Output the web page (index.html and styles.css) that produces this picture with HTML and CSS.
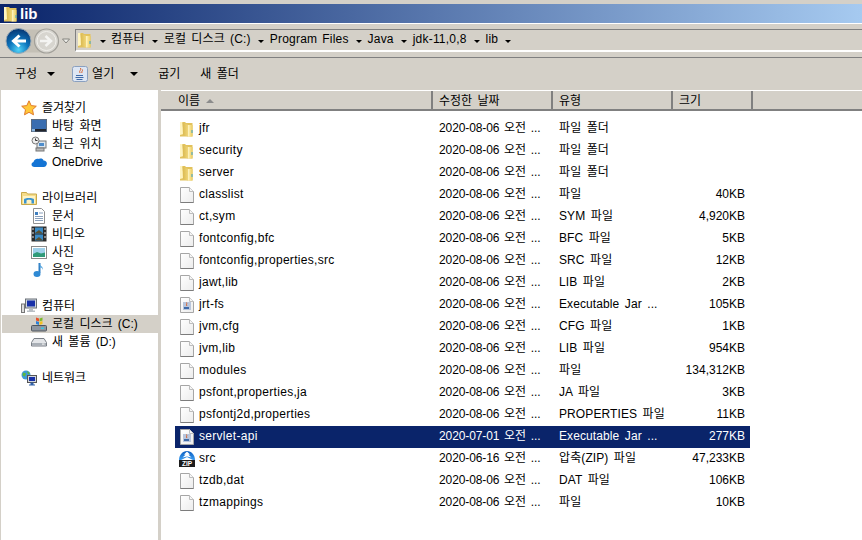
FILE: index.html
```html
<!DOCTYPE html>
<html lang="ko">
<head>
<meta charset="utf-8">
<title>lib</title>
<link rel="stylesheet" href="styles.css">
</head>
<body>
<svg class="defs" width="0" height="0" aria-hidden="true">
  <defs>
    <linearGradient id="gf" x1="0" y1="0" x2="1" y2="0"><stop offset="0" stop-color="#fff6c8"/><stop offset=".5" stop-color="#f6e08a"/><stop offset="1" stop-color="#e9c95e"/></linearGradient>
    <linearGradient id="gd" x1="0" y1="0" x2="1" y2="0"><stop offset="0" stop-color="#d9b84e"/><stop offset="1" stop-color="#f0d678"/></linearGradient>
    <linearGradient id="gp" x1="0" y1="0" x2="1" y2="1"><stop offset="0" stop-color="#ffffff"/><stop offset="1" stop-color="#ececec"/></linearGradient>
    <radialGradient id="gb" cx=".5" cy=".85" r=".8"><stop offset="0" stop-color="#52d4f8"/><stop offset=".5" stop-color="#0c74bc"/><stop offset="1" stop-color="#063a78"/></radialGradient>
    <linearGradient id="gz" x1="0" y1="0" x2="0" y2="1"><stop offset="0" stop-color="#0a5cc0"/><stop offset="1" stop-color="#3a9cf0"/></linearGradient>
    <symbol id="folder" viewBox="0 0 16 16">
      <path d="M1 1h5l1 1h6.500v13.500h-12.500z" fill="#e2c25c"/>
      <path d="M1 1h2.500l1 12-3.500 1z" fill="#fff4c0"/>
      <path d="M3.500 1.500l5.500 2.500v11.500l-5-1.500z" fill="url(#gd)"/>
      <path d="M9 4h4.500v11.500h-4.500z" fill="url(#gf)"/>
      <path d="M12.500 9h1v3h-1z" fill="#38a4cc"/>
    </symbol>
    <symbol id="doc" viewBox="0 0 16 16">
      <path d="M1.500 .5h9l4 4v11h-13z" fill="url(#gp)" stroke="#a6a6a6"/>
      <path d="M10.500 .5v4h4" fill="#f6f6f6" stroke="#bdbdbd"/>
      <path d="M1.500 15.500h13" stroke="#7c7c7c"/>
    </symbol>
    <symbol id="jar" viewBox="0 0 16 16">
      <path d="M1.500 .5h9l4 4v11h-13z" fill="url(#gp)" stroke="#a6a6a6"/>
      <path d="M10.500 .5v4h4" fill="#f6f6f6" stroke="#bdbdbd"/>
      <rect x="4" y="5" width="8" height="8" fill="#b9c6dc"/>
      <path d="M7.500 5.500c1 1.500-1 2 .5 3.500" stroke="#d9622a" fill="none"/>
      <path d="M5 10h5v2h-5z" fill="#3f6aa8"/>
    </symbol>
    <symbol id="zip" viewBox="0 0 16 16">
      <path d="M0 9c0-5 3.500-9 8-9s8 4 8 9z" fill="url(#gz)"/>
      <path d="M8 .5l3 3-1.500.3 3 2.700-4.500-1-4.500 1 3-2.700-1.500-.3zM2 9l6-3 6 3z" fill="#fff"/>
      <rect x="0" y="9" width="16" height="7" fill="#1c1c1c"/>
      <text x="8" y="15.200" text-anchor="middle" class="ziptxt">ZIP</text>
    </symbol>
    <symbol id="star" viewBox="0 0 16 16">
      <path d="M8 .8l2.200 4.800 5.100.6-3.800 3.500 1 5.100L8 12.300l-4.500 2.500 1-5.100L.7 6.200l5.100-.6z" fill="#ffc83a" stroke="#e07a2a"/>
    </symbol>
    <symbol id="libs" viewBox="0 0 16 16">
      <path d="M.5 2.500h5l1 1.500h9v10.500h-15z" fill="#f5dc8a" stroke="#c9a94a"/>
      <path d="M2 6h12v7.500h-12z" fill="#fff3c4"/>
      <path d="M3 13.500v-4c0-2 10-2 10 0v4h-2.500v-3c0-1-5-1-5 0v3z" fill="#3a94cf"/>
    </symbol>
    <symbol id="desk" viewBox="0 0 16 16">
      <rect x=".5" y="1.500" width="15" height="12" fill="#3a6db0" stroke="#5a6a80"/>
      <rect x="1" y="11" width="14" height="2.500" fill="#22252c"/>
      <rect x="1" y="11" width="3" height="2.500" fill="#8cb7e0"/>
    </symbol>
    <symbol id="recent" viewBox="0 0 16 16">
      <rect x="6" y="5" width="9" height="7" fill="#dce6ef" stroke="#777"/>
      <rect x="8" y="7" width="5" height="3" fill="#4d8ccb"/>
      <circle cx="4.500" cy="4.500" r="3.500" fill="#eee" stroke="#777"/>
      <path d="M4.500 2.500v2h2" stroke="#333" fill="none"/>
      <rect x="5" y="12" width="8" height="3" fill="#bbb" stroke="#777"/>
    </symbol>
    <symbol id="cloud" viewBox="0 0 16 16">
      <path d="M3.500 13c-3.500 0-4-4-1-5 .5-2.500 3-4 5.500-3 1.500-1 4-.5 4.500 1.500 3 0 4 2.500 3 4.500-.5 1.300-1.500 2-2.500 2z" fill="#1474d4"/>
    </symbol>
    <symbol id="docs" viewBox="0 0 16 16">
      <path d="M2.500 .5h8l3 3v12h-11z" fill="#fff" stroke="#909090"/>
      <rect x="4" y="4" width="3" height="3" fill="#3f7fbf"/>
      <path d="M8 5h4M4 8.500h8M4 10.500h8M4 12.500h8" stroke="#8aa0bc"/>
    </symbol>
    <symbol id="video" viewBox="0 0 16 16">
      <rect x=".5" y=".5" width="15" height="15" fill="#2c2c2c"/>
      <path d="M4 1.500h8v6h-8zM4 8.500h8v6h-8z" fill="#3a8ac4"/>
      <path d="M4 7l4-3 4 3.500zM4 14l4-3 4 3.500z" fill="#5a5030"/>
      <path d="M1.500 2h1v2h-1zM1.500 6h1v2h-1zM1.500 10h1v2h-1zM13.500 2h1v2h-1zM13.500 6h1v2h-1zM13.500 10h1v2h-1z" fill="#ddd"/>
    </symbol>
    <symbol id="photo" viewBox="0 0 16 16">
      <rect x=".5" y="2.500" width="15" height="12" fill="#fff" stroke="#8a8a8a"/>
      <rect x="2" y="4" width="12" height="9" fill="#9fd0ea"/>
      <path d="M2 10l4-2 4 1.500 4-1v4.500h-12z" fill="#2f9a78"/>
    </symbol>
    <symbol id="note" viewBox="0 0 16 16">
      <path d="M8.500 1v10" stroke="#2f7fc4" stroke-width="2" fill="none"/>
      <path d="M8.500 1c0 3 4 3 3.500 7-.5-2-2-2.500-3-2.500z" fill="#5aa8e0"/>
      <ellipse cx="6" cy="12" rx="3.500" ry="3" fill="#2f8ad4"/>
    </symbol>
    <symbol id="pc" viewBox="0 0 16 16">
      <rect x=".5" y="6" width="3" height="8.500" fill="#ddd" stroke="#777"/>
      <rect x="4.500" y="1" width="11" height="9" fill="#cfd6de" stroke="#6a7078"/>
      <rect x="6" y="2.500" width="8" height="6" fill="#1830a8"/>
      <path d="M8 10.500h4v2h2v1.500h-8v-1.500h2z" fill="#b8bec4"/>
    </symbol>
    <symbol id="cdrive" viewBox="0 0 16 16">
      <rect x=".5" y="9.500" width="15" height="5.500" rx="1" fill="#8e96a0" stroke="#50565e"/>
      <rect x="10" y="11.500" width="3" height="1.500" fill="#35c8e8"/>
      <path d="M5 1.500l3 1v3l-3-1z" fill="#e8502a"/>
      <path d="M8.500 2.500l3-1v3l-3 1z" fill="#7cb82a"/>
      <path d="M5 5l3 1v3l-3-1z" fill="#2a80d8"/>
      <path d="M8.500 6l3-1v3l-3 1z" fill="#f4c020"/>
    </symbol>
    <symbol id="drive" viewBox="0 0 16 16">
      <path d="M3 4.500h10l2.500 4v3.500h-15v-3.500z" fill="#e3e5e8" stroke="#7a7f86"/>
      <path d="M1 9h14v2.500h-14z" fill="#a9afb6"/>
      <rect x="11" y="9.500" width="2.500" height="1.200" fill="#eee"/>
    </symbol>
    <symbol id="net" viewBox="0 0 16 16">
      <circle cx="5" cy="5" r="4.500" fill="#3c9ad8"/>
      <path d="M2 2.500l3 1-1 3-2.500-1zM6 1l3 2-2 1.500z" fill="#5cb83c"/>
      <rect x="6.500" y="5.500" width="9" height="7" fill="#cfd6de" stroke="#555"/>
      <rect x="8" y="7" width="6" height="4" fill="#1830a8"/>
      <path d="M9.500 12.500h3v2h-3zM8 14.500h6v1h-6z" fill="#3060a8"/>
    </symbol>
    <symbol id="javaopen" viewBox="0 0 16 16">
      <rect x=".5" y=".5" width="15" height="15" rx="2" fill="#dde6f4" stroke="#8aa0c0"/>
      <path d="M8.500 2c1.500 2-2 2.500-.5 5M10.500 3.500c.5 1.500-1.500 2-.5 3.500" stroke="#d9622a" fill="none"/>
      <path d="M4 9h7v1h-7zM3.500 11h8v1h-8zM4.500 13h6v1h-6z" fill="#3f6aa8"/>
    </symbol>
  </defs>
</svg>

<div class="app">
  <header class="titlebar">
    <svg class="ico16"><use href="#folder"/></svg>
    <span class="title-text">lib</span>
  </header>

  <div class="navbar">
    <div class="navbtns">
      <svg class="navsvg" width="75" height="28" viewBox="0 0 75 28">
        <path d="M19 2.500h27v23h-27z" fill="#c4c0b6"/>
        <circle cx="46.500" cy="14" r="12" fill="#d7d5cf" stroke="#a2a09a" stroke-width="1.200"/>
        <circle cx="46.500" cy="14" r="9.500" fill="none" stroke="#f0efeb"/>
        <path d="M40 14h10M45.500 9l5.500 5-5.500 5" fill="none" stroke="#f4f4f2" stroke-width="2.500"/>
        <circle cx="18.500" cy="14" r="12.500" fill="url(#gb)" stroke="#9aa8b4"/>
        <path d="M26 14h-12M19.500 8.500l-6 5.500 6 5.500" fill="none" stroke="#fff" stroke-width="3"/>
        <path d="M62.500 12h7l-3.500 4z" fill="#eeeeea" stroke="#85847f"/>
      </svg>
    </div>
    <nav class="addr">
      <svg class="ico16 addr-ico"><use href="#folder"/></svg>
      <i class="ar"></i><span>컴퓨터</span>
      <i class="ar"></i><span>로컬 디스크 (C:)</span>
      <i class="ar"></i><span>Program Files</span>
      <i class="ar"></i><span>Java</span>
      <i class="ar"></i><span>jdk-11,0,8</span>
      <i class="ar"></i><span>lib</span>
      <i class="ar"></i>
    </nav>
  </div>

  <div class="toolbar">
    <span class="tool tool-first">구성</span><i class="ar big ar-org"></i>
    <svg class="ico16 tool-ico"><use href="#javaopen"/></svg>
    <span class="tool">열기</span><i class="ar big ar-open"></i>
    <span class="tool tool-burn">굽기</span>
    <span class="tool tool-new">새 폴더</span>
  </div>

  <div class="body">
    <aside class="side">
      <div class="grp">
        <div class="s-h"><svg class="ico16"><use href="#star"/></svg><span>즐겨찾기</span></div>
        <div class="s-i"><svg class="ico16"><use href="#desk"/></svg><span>바탕 화면</span></div>
        <div class="s-i"><svg class="ico16"><use href="#recent"/></svg><span>최근 위치</span></div>
        <div class="s-i"><svg class="ico16"><use href="#cloud"/></svg><span>OneDrive</span></div>
      </div>
      <div class="grp">
        <div class="s-h"><svg class="ico16"><use href="#libs"/></svg><span>라이브러리</span></div>
        <div class="s-i"><svg class="ico16"><use href="#docs"/></svg><span>문서</span></div>
        <div class="s-i"><svg class="ico16"><use href="#video"/></svg><span>비디오</span></div>
        <div class="s-i"><svg class="ico16"><use href="#photo"/></svg><span>사진</span></div>
        <div class="s-i"><svg class="ico16"><use href="#note"/></svg><span>음악</span></div>
      </div>
      <div class="grp">
        <div class="s-h"><svg class="ico16"><use href="#pc"/></svg><span>컴퓨터</span></div>
        <div class="s-i s-sel"><svg class="ico16"><use href="#cdrive"/></svg><span>로컬 디스크 (C:)</span></div>
        <div class="s-i"><svg class="ico16"><use href="#drive"/></svg><span>새 볼륨 (D:)</span></div>
      </div>
      <div class="grp">
        <div class="s-h"><svg class="ico16"><use href="#net"/></svg><span>네트워크</span></div>
      </div>
    </aside>

    <main class="main">
      <div class="cols">
        <div class="col c-name">이름<i class="sort"></i></div>
        <div class="col c-date">수정한 날짜</div>
        <div class="col c-type">유형</div>
        <div class="col c-size">크기</div>
        <div class="col c-rest"></div>
      </div>
      <div class="rows">
        <div class="row"><svg class="ico16"><use href="#folder"/></svg><span class="n">jfr</span><span class="d">2020-08-06 오전 ...</span><span class="t">파일 폴더</span><span class="s"></span></div>
        <div class="row"><svg class="ico16"><use href="#folder"/></svg><span class="n">security</span><span class="d">2020-08-06 오전 ...</span><span class="t">파일 폴더</span><span class="s"></span></div>
        <div class="row"><svg class="ico16"><use href="#folder"/></svg><span class="n">server</span><span class="d">2020-08-06 오전 ...</span><span class="t">파일 폴더</span><span class="s"></span></div>
        <div class="row"><svg class="ico16"><use href="#doc"/></svg><span class="n">classlist</span><span class="d">2020-08-06 오전 ...</span><span class="t">파일</span><span class="s">40KB</span></div>
        <div class="row"><svg class="ico16"><use href="#doc"/></svg><span class="n">ct,sym</span><span class="d">2020-08-06 오전 ...</span><span class="t">SYM 파일</span><span class="s">4,920KB</span></div>
        <div class="row"><svg class="ico16"><use href="#doc"/></svg><span class="n">fontconfig,bfc</span><span class="d">2020-08-06 오전 ...</span><span class="t">BFC 파일</span><span class="s">5KB</span></div>
        <div class="row"><svg class="ico16"><use href="#doc"/></svg><span class="n">fontconfig,properties,src</span><span class="d">2020-08-06 오전 ...</span><span class="t">SRC 파일</span><span class="s">12KB</span></div>
        <div class="row"><svg class="ico16"><use href="#doc"/></svg><span class="n">jawt,lib</span><span class="d">2020-08-06 오전 ...</span><span class="t">LIB 파일</span><span class="s">2KB</span></div>
        <div class="row"><svg class="ico16"><use href="#jar"/></svg><span class="n">jrt-fs</span><span class="d">2020-08-06 오전 ...</span><span class="t">Executable Jar ...</span><span class="s">105KB</span></div>
        <div class="row"><svg class="ico16"><use href="#doc"/></svg><span class="n">jvm,cfg</span><span class="d">2020-08-06 오전 ...</span><span class="t">CFG 파일</span><span class="s">1KB</span></div>
        <div class="row"><svg class="ico16"><use href="#doc"/></svg><span class="n">jvm,lib</span><span class="d">2020-08-06 오전 ...</span><span class="t">LIB 파일</span><span class="s">954KB</span></div>
        <div class="row"><svg class="ico16"><use href="#doc"/></svg><span class="n">modules</span><span class="d">2020-08-06 오전 ...</span><span class="t">파일</span><span class="s">134,312KB</span></div>
        <div class="row"><svg class="ico16"><use href="#doc"/></svg><span class="n">psfont,properties,ja</span><span class="d">2020-08-06 오전 ...</span><span class="t">JA 파일</span><span class="s">3KB</span></div>
        <div class="row"><svg class="ico16"><use href="#doc"/></svg><span class="n">psfontj2d,properties</span><span class="d">2020-08-06 오전 ...</span><span class="t">PROPERTIES 파일</span><span class="s">11KB</span></div>
        <div class="row sel"><svg class="ico16"><use href="#jar"/></svg><span class="n">servlet-api</span><span class="d">2020-07-01 오전 ...</span><span class="t">Executable Jar ...</span><span class="s">277KB</span></div>
        <div class="row"><svg class="ico16"><use href="#zip"/></svg><span class="n">src</span><span class="d">2020-06-16 오전 ...</span><span class="t">압축(ZIP) 파일</span><span class="s">47,233KB</span></div>
        <div class="row"><svg class="ico16"><use href="#doc"/></svg><span class="n">tzdb,dat</span><span class="d">2020-08-06 오전 ...</span><span class="t">DAT 파일</span><span class="s">106KB</span></div>
        <div class="row"><svg class="ico16"><use href="#doc"/></svg><span class="n">tzmappings</span><span class="d">2020-08-06 오전 ...</span><span class="t">파일</span><span class="s">10KB</span></div>
      </div>
    </main>
  </div>
</div>
</body>
</html>
```
FILE: styles.css
```css
* { box-sizing: border-box; }
html, body { margin: 0; height: 100%; overflow: hidden; }
body {
  background: #d4d0c8;
  color: #000;
  font: 12px/14px "Liberation Sans", "Noto Sans CJK KR", sans-serif;
  word-spacing: 2px;
}
.defs { position: absolute; }
.app { height: 540px; display: flex; flex-direction: column; }
.ico16 { width: 16px; height: 16px; flex: none; display: block; }
.ziptxt { font: bold 6.500px "Liberation Sans", sans-serif; fill: #fff; }

.titlebar {
  margin-top: 4px;
  height: 19px;
  flex: none;
  display: flex;
  align-items: center;
  gap: 1px;
  padding-left: 3px;
  color: #fff;
  font-weight: bold;
  font-size: 15px;
  background: linear-gradient(90deg, #0a246a, #a6caf0);
}

.navbar { height: 35px; flex: none; display: flex; border-bottom: 1px solid #808080; border-top: 1px solid #fff; padding-top: 5px; }
.navbtns { width: 75px; flex: none; margin-top: -2px; }
.navsvg { display: block; }
.addr {
  flex: 1;
  height: 23px;
  display: flex;
  align-items: center;
  background: #d4d0c8;
  border-top: 1px solid #808080;
  border-bottom: 2px solid #fff;
  border-left: 1px solid #808080;
  padding-left: 1px;
  letter-spacing: .2px;
  word-spacing: 1.500px;
}
.addr span { padding-bottom: 2px; }
.addr-ico { margin-right: 7px; }
.ar { width: 0; height: 0; flex: none; border: 3px solid transparent; border-top: 3px solid #000; border-bottom: 0; margin: 2px 6px 0 7px; }
.addr-ico + .ar { margin-left: 0; margin-right: 5px; }
.ar.big { border-width: 4px 4px 0; }
.ar-org { margin: 0 0 0 10px; }
.ar-open { margin: 0 0 0 16px; }

.toolbar { height: 32px; flex: none; display: flex; align-items: center; padding-left: 15px; }
.tool-ico { margin-left: 17px; margin-right: 4px; }
.tool-burn { margin-left: 20px; }
.tool-new { margin-left: 20px; }

.body { flex: 1; min-height: 0; display: flex; }
.side { width: 157px; flex: none; background: #fff; margin-left: 1px; padding-top: 9px; }
.grp { margin-bottom: 18px; }
.s-h, .s-i { height: 18px; display: flex; align-items: center; }
.s-h { padding-left: 20px; gap: 5px; }
.s-i { padding-left: 29px; gap: 5px; margin-left: 1px; }
.s-sel { background: #d4d0c8; }

.main { flex: 1; min-width: 0; margin-left: 3px; display: flex; flex-direction: column; background: #fff; }
.cols { height: 21px; flex: none; display: flex; background: #d4d0c8; border-top: 1px solid #fff; border-bottom: 2px solid #808080; }
.col { height: 18px; display: flex; align-items: center; padding: 1px 0 0 6px; border-right: 2px solid #808080; }
.c-name { width: 272px; padding-left: 17px; }
.c-date { width: 120px; }
.c-type { width: 120px; }
.c-size { width: 80px; }
.c-rest { flex: 1; border-right: 0; }
.sort { width: 0; height: 0; border: 4px solid transparent; border-bottom: 4px solid #8c8c8c; border-top: 0; margin-left: 6px; }

.rows { padding: 7px 0 0 14px; }
.row { width: 575px; height: 22px; display: flex; align-items: center; padding-left: 4px; }
.row span { padding-bottom: 2px; }
.row .n { width: 244px; padding-left: 4px; white-space: nowrap; letter-spacing: .3px; }
.row .d { width: 120px; white-space: nowrap; letter-spacing: -.1px; word-spacing: 1.500px; }
.row .t { width: 116px; white-space: nowrap; letter-spacing: .1px; }
.row .s { width: 70px; text-align: right; white-space: nowrap; }
.sel { background: #0a246a; color: #fff; }
```
